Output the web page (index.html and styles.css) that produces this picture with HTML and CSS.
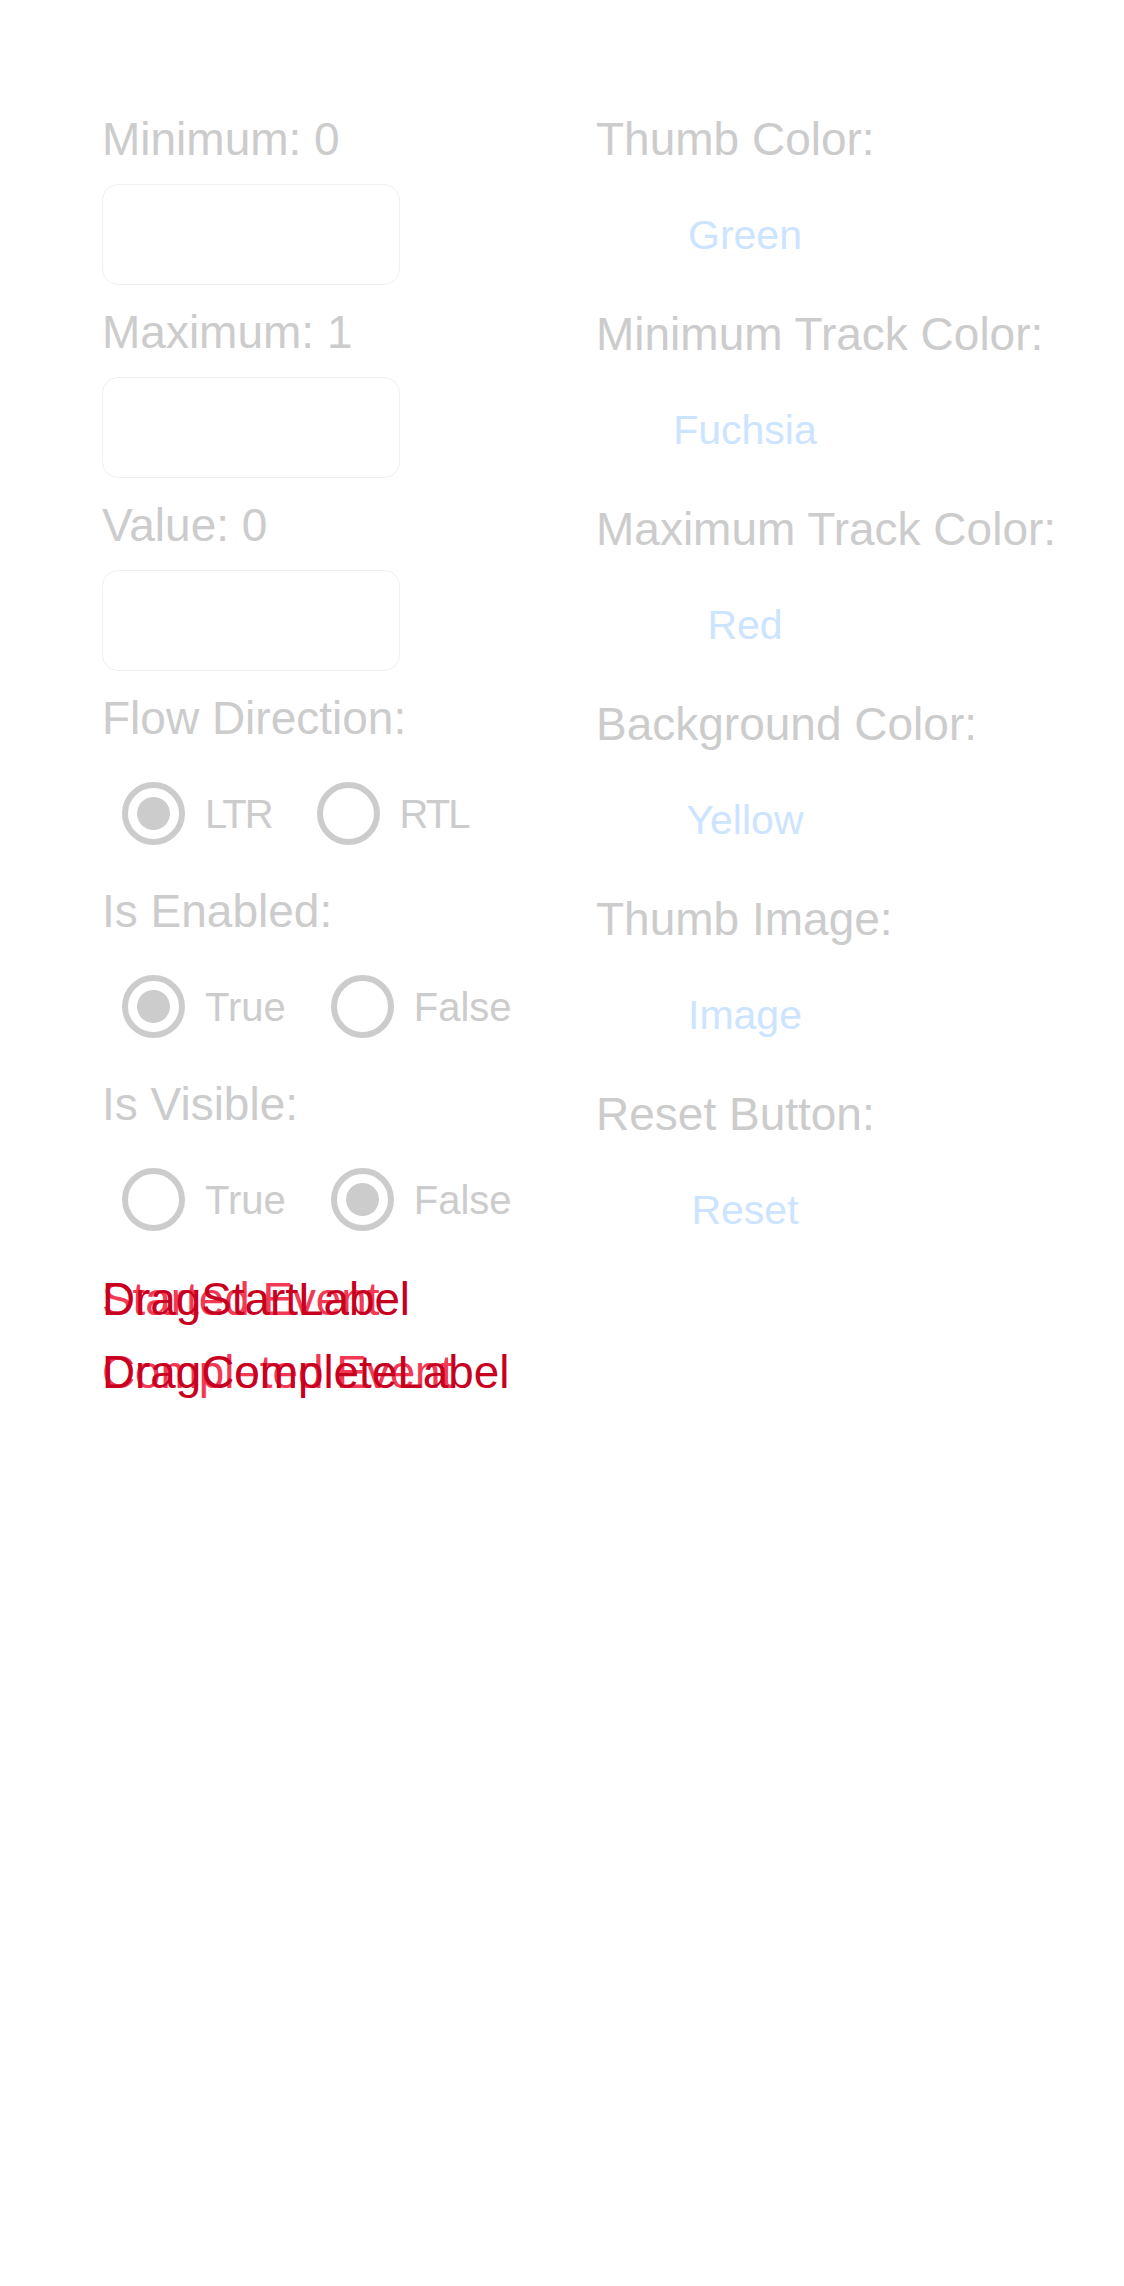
FILE: index.html
```html
<!DOCTYPE html>
<html lang="en">
<head>
<meta charset="utf-8">
<title>Slider options</title>
<link rel="stylesheet" href="styles.css">
</head>
<body>
<main class="page">
  <div class="columns">
    <section class="col col-left">
      <div class="field">
        <div class="label">Minimum: 0</div>
        <div class="control"><div class="entry"></div></div>
      </div>
      <div class="field">
        <div class="label">Maximum: 1</div>
        <div class="control"><div class="entry"></div></div>
      </div>
      <div class="field">
        <div class="label">Value: 0</div>
        <div class="control"><div class="entry"></div></div>
      </div>
      <div class="field">
        <div class="label">Flow Direction:</div>
        <div class="control radios">
          <div class="option"><span class="radio on"></span><span class="opt-text opt-tight">LTR</span></div>
          <div class="option"><span class="radio"></span><span class="opt-text opt-tight">RTL</span></div>
        </div>
      </div>
      <div class="field">
        <div class="label">Is Enabled:</div>
        <div class="control radios">
          <div class="option"><span class="radio on"></span><span class="opt-text">True</span></div>
          <div class="option"><span class="radio"></span><span class="opt-text">False</span></div>
        </div>
      </div>
      <div class="field">
        <div class="label">Is Visible:</div>
        <div class="control radios">
          <div class="option"><span class="radio"></span><span class="opt-text">True</span></div>
          <div class="option"><span class="radio on"></span><span class="opt-text">False</span></div>
        </div>
      </div>
    </section>
    <section class="col col-right">
      <div class="field field-r">
        <div class="label">Thumb Color:</div>
        <div class="control"><div class="value-btn">Green</div></div>
      </div>
      <div class="field field-r">
        <div class="label">Minimum Track Color:</div>
        <div class="control"><div class="value-btn">Fuchsia</div></div>
      </div>
      <div class="field field-r">
        <div class="label">Maximum Track Color:</div>
        <div class="control"><div class="value-btn">Red</div></div>
      </div>
      <div class="field field-r">
        <div class="label">Background Color:</div>
        <div class="control"><div class="value-btn">Yellow</div></div>
      </div>
      <div class="field field-r">
        <div class="label">Thumb Image:</div>
        <div class="control"><div class="value-btn">Image</div></div>
      </div>
      <div class="field field-r">
        <div class="label">Reset Button:</div>
        <div class="control"><div class="value-btn">Reset</div></div>
      </div>
    </section>
  </div>
  <div class="events">
    <div class="event-line">
      <span class="ev ev-light">Started Event</span>
      <span class="ev ev-dark">DragStartLabel</span>
    </div>
    <div class="event-line">
      <span class="ev ev-light">Completed Event</span>
      <span class="ev ev-dark">DragCompleteLabel</span>
    </div>
  </div>
</main>
</body>
</html>
```
FILE: styles.css
```css
html, body {
  margin: 0;
  padding: 0;
  background: #ffffff;
}

body {
  font-family: "Liberation Sans", Arial, sans-serif;
  color: #cccccc;
}

.page {
  padding: 112px 0 0 102px;
}

.columns {
  display: grid;
  grid-template-columns: 494px 1fr;
  align-items: start;
}

.field {
  display: flex;
  flex-direction: column;
  margin-bottom: 20px;
}

.field-r {
  margin-bottom: 22px;
}

.field-r:last-child {
  margin-bottom: 0;
}

.label {
  font-size: 46px;
  line-height: 54px;
  height: 54px;
  white-space: nowrap;
  color: #cccccc;
}

.control {
  margin-top: 18px;
  height: 101px;
  display: flex;
  align-items: center;
}

.entry {
  width: 298px;
  height: 101px;
  box-sizing: border-box;
  border: 1.5px solid #efefef;
  border-radius: 16px;
  background: #ffffff;
}

.radios {
  padding-left: 20px;
  gap: 45px;
}

.option {
  display: flex;
  align-items: center;
  gap: 20px;
}

.radio {
  width: 63px;
  height: 63px;
  box-sizing: border-box;
  border: 6px solid #cccccc;
  border-radius: 50%;
  display: flex;
  align-items: center;
  justify-content: center;
  flex: none;
}

.radio.on::after {
  content: "";
  width: 33px;
  height: 33px;
  border-radius: 50%;
  background: #cccccc;
}

.opt-text {
  font-size: 40px;
  line-height: 48px;
  color: #cccccc;
  white-space: nowrap;
}

.opt-tight {
  letter-spacing: -2px;
}

.value-btn {
  width: 298px;
  text-align: center;
  font-size: 41px;
  line-height: 50px;
  color: #cce4ff;
  white-space: nowrap;
}

.events {
  margin-top: 3px;
  display: flex;
  flex-direction: column;
  gap: 19px;
}

.event-line {
  display: grid;
  height: 54px;
}

.ev {
  grid-area: 1 / 1;
  font-size: 45.8px;
  line-height: 54px;
  white-space: nowrap;
}

.ev-light {
  color: #f23a55;
}

.ev-dark {
  color: #c8001f;
}
```
